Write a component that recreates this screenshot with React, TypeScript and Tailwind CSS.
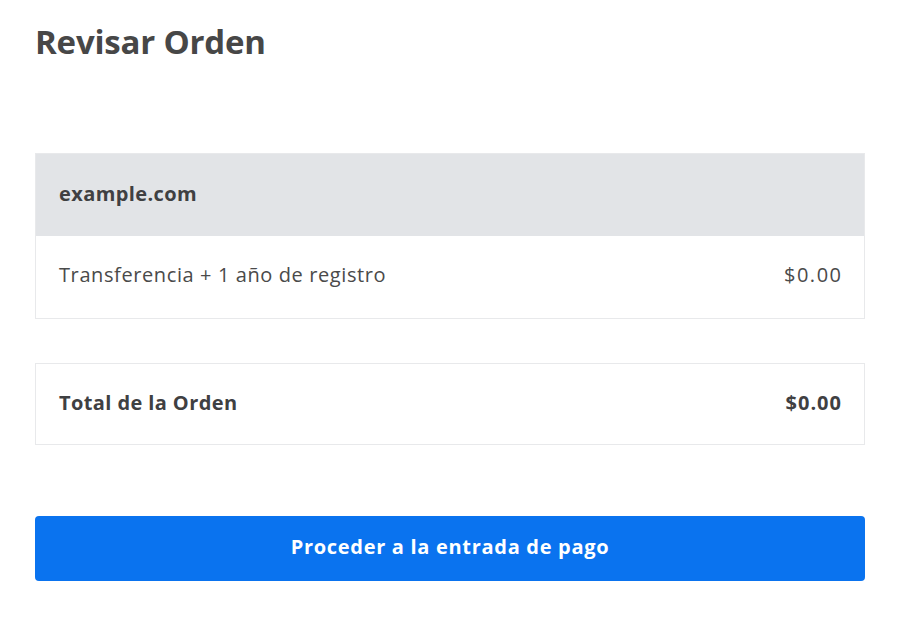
export default function App() {
  return (
    <div className="min-h-[625px] w-[900px] bg-white px-[35px] pt-[20px]" style={{ fontFamily: '"Open Sans", "Noto Sans", sans-serif' }}>
      <h1 className="text-[33px] font-bold leading-[44px] tracking-[-0.2px] text-[#474747]">Revisar Orden</h1>

      <div className="mt-[89px] border border-[#e8e9eb]">
        <div className="flex h-[82px] items-center bg-[#e2e4e7] px-[23px] pb-[3px]">
          <span className="text-[20px] font-bold tracking-[0.4px] text-[#3f4042]">example.com</span>
        </div>
        <div className="flex h-[82px] items-center justify-between px-[23px] pb-[5px] text-[20px] tracking-[0.6px] text-[#4a4a4a]">
          <span>Transferencia + 1 año de registro</span>
          <span className="-mr-[1.5px] tracking-[1.5px]">$0.00</span>
        </div>
      </div>

      <div className="mt-[44px] flex h-[82px] items-center justify-between border border-[#e8e9eb] px-[23px] pb-[3px] text-[20px] font-bold tracking-[0.4px] text-[#3f4042]">
        <span>Total de la Orden</span>
        <span className="-mr-[1px] tracking-[1px]">$0.00</span>
      </div>

      <button className="mt-[71px] flex h-[65px] w-full items-center justify-center rounded-[4px] bg-[#0a73ef] pb-[3px] text-[20px] font-bold tracking-[0.7px] text-white">
        Proceder a la entrada de pago
      </button>
    </div>
  )
}
